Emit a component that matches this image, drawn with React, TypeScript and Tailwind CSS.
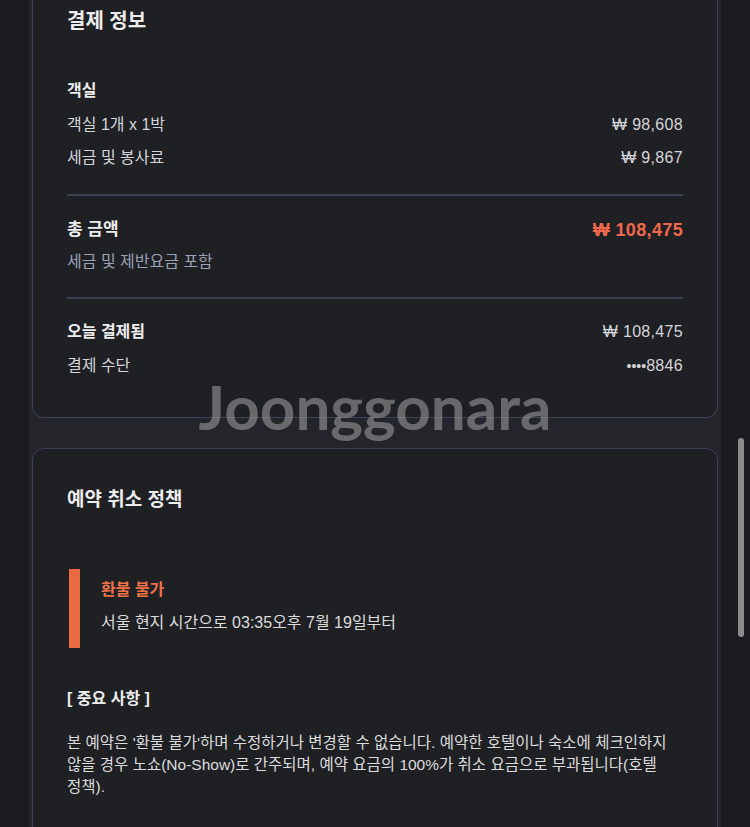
const font = '[font-family:"Liberation_Sans","Noto_Sans_CJK_KR",sans-serif]';

function Row({ label, value }: { label: string; value: React.ReactNode }) {
  return (
    <div className="flex items-center justify-between text-[16px] leading-[22px] text-[#d4d5d9]">
      <span>{label}</span>
      <span className="tracking-[0.02em]">{value}</span>
    </div>
  );
}

function Divider() {
  return <div className="h-[2px] bg-[#3a4152]" />;
}

export default function App() {
  return (
    <div className={`relative h-[827px] overflow-hidden bg-[#1b1c1f] ${font}`}>
      <div className="ml-[29px] flex h-full w-[692px] flex-col gap-[30px] bg-[#23252a] px-[3px]">
        {/* 결제 정보 — top is scrolled out of view */}
        <section className="rounded-b-[12px] border-x-[1.5px] border-b-[1.5px] border-[#3d4458] bg-[#1f2024] px-[34px] pb-[40px] pt-[7px]">
          <h2 className="text-[20px] font-bold leading-[28px] text-[#ececec]">결제 정보</h2>

          <div className="mt-[45px] text-[16px] font-bold leading-[22px] text-[#ececec]">객실</div>
          <div className="mt-[12px] flex flex-col gap-[11px]">
            <Row label="객실 1개 x 1박" value="₩ 98,608" />
            <Row label="세금 및 봉사료" value="₩ 9,867" />
          </div>

          <div className="mt-[25px]">
            <Divider />
          </div>

          <div className="mt-[22px] flex items-center justify-between font-bold leading-[24px]">
            <span className="text-[17px] text-[#ececec]">총 금액</span>
            <span className="text-[18px] tracking-[0.02em] text-[#f0674c]">₩ 108,475</span>
          </div>
          <div className="mt-[9px] text-[16px] leading-[22px] text-[#9ba1b5]">세금 및 제반요금 포함</div>

          <div className="mt-[24px]">
            <Divider />
          </div>

          <div className="mt-[22px] flex items-center justify-between text-[16px] leading-[22px]">
            <span className="font-bold text-[#ececec]">오늘 결제됨</span>
            <span className="tracking-[0.02em] text-[#d4d5d9]">₩ 108,475</span>
          </div>
          <div className="mt-[12px]">
            <Row
              label="결제 수단"
              value={
                <>
                  <span className="text-[14px] tracking-normal">••••</span>8846
                </>
              }
            />
          </div>
        </section>

        {/* 예약 취소 정책 */}
        <section className="shrink-0 rounded-[12px] border-[1.5px] border-[#3d4458] bg-[#1f2024] px-[34px] pb-[40px] pt-[37px]">
          <h2 className="text-[19px] font-bold leading-[28px] text-[#ececec]">예약 취소 정책</h2>

          <div className="ml-[2px] mt-[55px] flex h-[79px] gap-[21px]">
            <div className="w-[11px] bg-[#ec6a42]" />
            <div className="flex flex-col gap-[11px] pt-[10px]">
              <div className="text-[16px] font-bold leading-[22px] text-[#ef7249]">환불 불가</div>
              <div className="text-[16px] leading-[22px] text-[#dcdcdc]">서울 현지 시간으로 03:35오후 7월 19일부터</div>
            </div>
          </div>

          <div className="mt-[40px] text-[16px] font-bold leading-[22px] text-[#ececec]">[ 중요 사항 ]</div>
          <p className="mt-[22px] break-keep text-[15.5px] leading-[22px] text-[#dcdcdc]">
            본 예약은 '환불 불가'하며 수정하거나 변경할 수 없습니다. 예약한 호텔이나 숙소에 체크인하지 않을 경우 노쇼(No-Show)로 간주되며, 예약 요금의 100%가 취소 요금으로 부과됩니다(호텔 정책).
          </p>
        </section>
      </div>

      {/* watermark */}
      <div className="pointer-events-none absolute inset-x-0 top-[366px] text-center [font-family:Lato,sans-serif] text-[62px] font-bold leading-[80px] text-[#9a9a9a]/60">
        Joonggonara
      </div>

      {/* scrollbar thumb */}
      <div className="absolute left-[738px] top-[438px] h-[199px] w-[6px] rounded-full bg-[#8c8c8c]" />
    </div>
  );
}
